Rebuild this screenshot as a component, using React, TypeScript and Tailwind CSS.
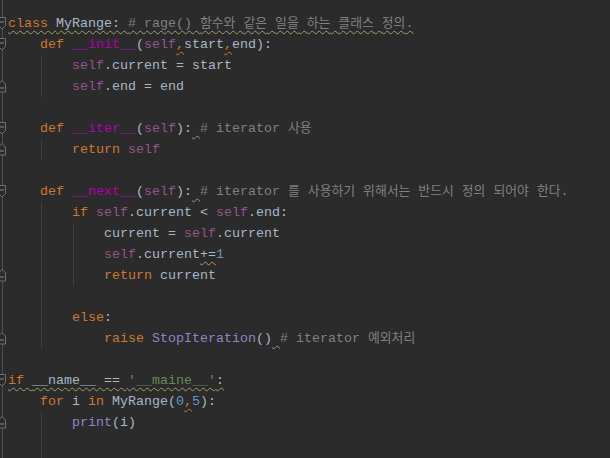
import React from 'react';

type Tok = { t: string; c: string; w?: string };

const K = 'text-[#cc7832]';
const S = 'text-[#94558d]';
const M = 'text-[#b200b2]';
const D = 'text-[#a9b7c6]';
const C = 'text-[#808080]';
const STR = 'text-[#6a8759]';
const N = 'text-[#6897bb]';
const B = 'text-[#8888c6]';

const wavyWarn = 'underline decoration-wavy decoration-1 underline-offset-[3px] decoration-[#a09c6c]';
const wavyComma = 'underline decoration-wavy decoration-1 underline-offset-[3px] decoration-[#c5772f]';
const wavyGray = 'underline decoration-wavy decoration-1 underline-offset-[3px] decoration-[#9a9a80]';

interface Line {
  indent: number;
  toks: Tok[];
  guides?: number[];
  mark?: 'open' | 'close';
  wavy?: boolean;
}

const lines: Line[] = [
  { indent: 0, mark: 'open', wavy: true, toks: [{ t: 'class ', c: K }, { t: 'MyRange: ', c: D }, { t: '# rage() 함수와 같은 일을 하는 클래스 정의.', c: C }] },
  { indent: 1, mark: 'open', toks: [{ t: 'def ', c: K }, { t: '__init__', c: M }, { t: '(', c: D }, { t: 'self', c: S }, { t: ',', c: K, w: wavyComma }, { t: 'start', c: D }, { t: ',', c: K, w: wavyComma }, { t: 'end', c: D }, { t: '):', c: D }] },
  { indent: 2, guides: [1], toks: [{ t: 'self', c: S }, { t: '.current = start', c: D }] },
  { indent: 2, guides: [1], mark: 'close', toks: [{ t: 'self', c: S }, { t: '.end = end', c: D }] },
  { indent: 0, toks: [] },
  { indent: 1, mark: 'open', toks: [{ t: 'def ', c: K }, { t: '__iter__', c: M }, { t: '(', c: D }, { t: 'self', c: S }, { t: '):', c: D }, { t: ' ', c: D, w: wavyGray }, { t: '# iterator 사용', c: C }] },
  { indent: 2, guides: [1], mark: 'close', toks: [{ t: 'return ', c: K }, { t: 'self', c: S }] },
  { indent: 0, toks: [] },
  { indent: 1, mark: 'open', toks: [{ t: 'def ', c: K }, { t: '__next__', c: M }, { t: '(', c: D }, { t: 'self', c: S }, { t: '):', c: D }, { t: ' ', c: D, w: wavyGray }, { t: '# iterator 를 사용하기 위해서는 반드시 정의 되어야 한다.', c: C }] },
  { indent: 2, guides: [1], toks: [{ t: 'if ', c: K }, { t: 'self', c: S }, { t: '.current < ', c: D }, { t: 'self', c: S }, { t: '.end:', c: D }] },
  { indent: 3, guides: [1, 2], toks: [{ t: 'current = ', c: D }, { t: 'self', c: S }, { t: '.current', c: D }] },
  { indent: 3, guides: [1, 2], toks: [{ t: 'self', c: S }, { t: '.current', c: D }, { t: '+=', c: D, w: wavyWarn }, { t: '1', c: N }] },
  { indent: 3, guides: [1, 2], mark: 'close', toks: [{ t: 'return ', c: K }, { t: 'current', c: D }] },
  { indent: 0, guides: [1], toks: [] },
  { indent: 2, guides: [1], toks: [{ t: 'else', c: K }, { t: ':', c: D }] },
  { indent: 3, guides: [1], mark: 'close', toks: [{ t: 'raise ', c: K }, { t: 'StopIteration', c: B }, { t: '()', c: D }, { t: ' ', c: D, w: wavyGray }, { t: '# iterator 예외처리', c: C }] },
  { indent: 0, toks: [] },
  { indent: 0, mark: 'open', wavy: true, toks: [{ t: 'if ', c: K }, { t: '__name__ == ', c: D }, { t: "'__maine__'", c: STR }, { t: ':', c: D }] },
  { indent: 1, toks: [{ t: 'for ', c: K }, { t: 'i ', c: D }, { t: 'in ', c: K }, { t: 'MyRange(', c: D }, { t: '0', c: N }, { t: ',', c: K, w: wavyComma }, { t: '5', c: N }, { t: '):', c: D }] },
  { indent: 2, guides: [1], mark: 'close', toks: [{ t: 'print', c: B }, { t: '(i)', c: D }] },
  { indent: 0, guides: [1], toks: [] },
  { indent: 0, guides: [1], toks: [] },
];

// hangul runs get a slightly narrower size, like the IDE's fallback font
const withKo = (text: string) =>
  text.split(/([\uac00-\ud7a3]+)/).map((part, i) =>
    /[\uac00-\ud7a3]/.test(part) ? (
      <span key={i} className="text-[12.85px]">{part}</span>
    ) : (
      part
    )
  );

const FoldMark: React.FC<{ kind: 'open' | 'close' }> = ({ kind }) => (
  <svg width="9" height="13" viewBox="0 0 9 13" className="absolute left-[-10px] top-[4px]">
    {kind === 'open' ? (
      <path d="M0.5 0.5 H7.5 V8.5 L4 12 L0.5 8.5 Z" fill="#2b2b2b" stroke="#707070" />
    ) : (
      <path d="M0.5 12 H7.5 V4 L4 0.5 L0.5 4 Z" fill="#2b2b2b" stroke="#707070" />
    )}
    <path d={kind === 'open' ? 'M2 5 H6' : 'M2 8 H6'} stroke="#8a8a8a" />
  </svg>
);

const Row: React.FC<{ line: Line }> = ({ line }) => {
  const cells = Math.max(line.indent, ...(line.guides ?? [0]).map((g) => g + 1));
  const indentCells = Array.from({ length: line.toks.length ? line.indent : cells }, (_, i) => i);
  return (
    <div className="relative flex h-[21px] shrink-0 items-center whitespace-pre">
      {line.mark && <FoldMark kind={line.mark} />}
      {indentCells.map((i) => (
        <span key={i} className="flex h-full w-[32px] shrink-0">
          {line.guides?.includes(i) && <span className="ml-px h-full w-px bg-[#3d3d3d]" />}
        </span>
      ))}
      <span className={line.wavy ? wavyWarn : ''}>
        {line.toks.map((tok, i) => (
          <span key={i} className={`${tok.c} ${tok.w ?? ''}`}>
            {withKo(tok.t)}
          </span>
        ))}
      </span>
    </div>
  );
};

export default function App() {
  return (
    <div className="flex h-[458px] w-[610px] overflow-hidden bg-[#2b2b2b] font-['Liberation_Mono','Noto_Sans_CJK_KR',monospace] text-[13.33px] leading-[21px]">
      <div className="w-[8px] shrink-0 pl-[2px]">
        <div className="h-full w-px bg-[#4f4f4f]" />
      </div>
      <div className="flex flex-col pt-[13px]">
        {lines.map((line, i) => (
          <Row key={i} line={line} />
        ))}
      </div>
    </div>
  );
}
